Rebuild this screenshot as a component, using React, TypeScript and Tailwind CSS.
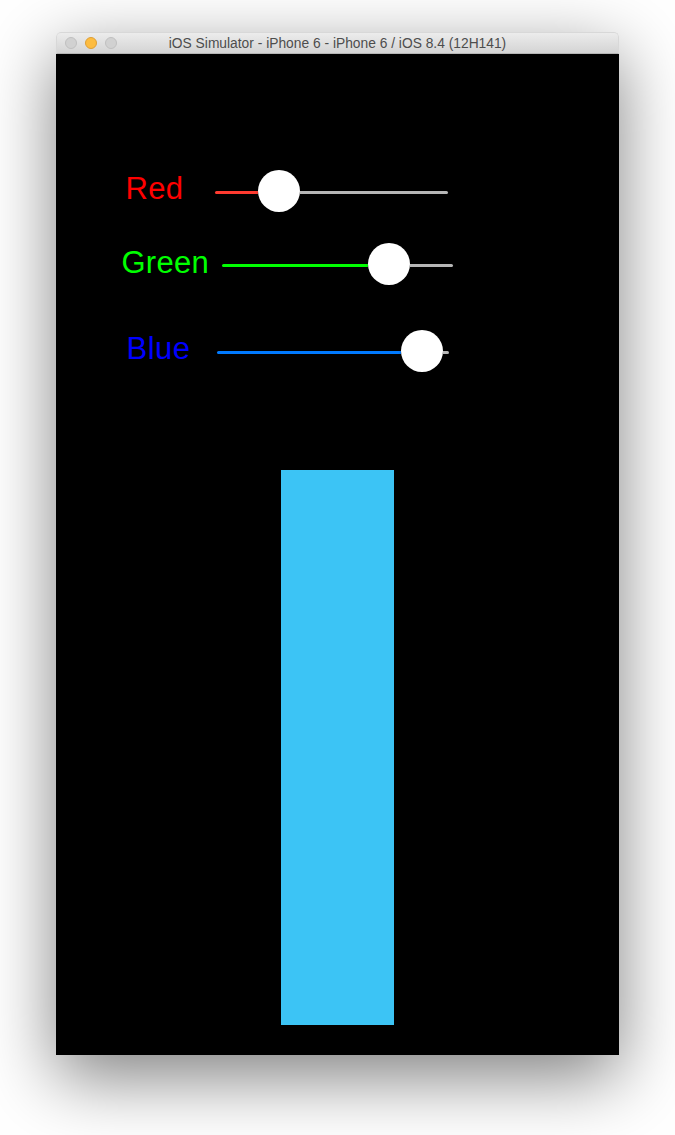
import React from "react";

function Slider({
  minLen,
  maxLen,
  color,
}: {
  minLen: number;
  maxLen: number;
  color: string;
}) {
  return (
    <div className="flex items-center">
      <div className="h-[2.5px] mt-[3px] rounded-l-full" style={{ width: minLen, backgroundColor: color }} />
      <div className="w-[42px] h-[42px] rounded-full bg-white shrink-0 shadow-[0_2px_3px_rgba(0,0,0,0.25)]" />
      <div className="h-[2.5px] mt-[3px] rounded-r-full bg-[#b6b6b6]" style={{ width: maxLen }} />
    </div>
  );
}

export default function App() {
  return (
    <div className="w-[675px] h-[1135px] bg-white overflow-hidden" style={{ fontFamily: '"Liberation Sans", Arial, sans-serif' }}>
      <div className="ml-[56px] mt-[32px] w-[563px] rounded-t-[5px] shadow-[0_22px_70px_0px_rgba(0,0,0,0.5)]">
        {/* Title bar */}
        <div className="relative h-[22px] rounded-t-[5px] bg-gradient-to-b from-[#ececec] to-[#d4d4d4] border-t border-x border-[#d8d8d8] border-b border-b-[#b5b5b5] flex items-center justify-center">
          <div className="absolute left-[8px] top-[4px] flex gap-[8px]">
            <div className="w-[12px] h-[12px] rounded-full bg-[#d1d1d1] border border-[#c0c0c0]" />
            <div className="w-[12px] h-[12px] rounded-full bg-[#fdbc40] border border-[#de9f34]" />
            <div className="w-[12px] h-[12px] rounded-full bg-[#d1d1d1] border border-[#c0c0c0]" />
          </div>
          <span className="text-[13.8px] leading-none text-[#4d4d4d] mt-[1px]">
            iOS Simulator - iPhone 6 - iPhone 6 / iOS 8.4 (12H141)
          </span>
        </div>
        {/* Content */}
        <div className="h-[1001px] bg-black flex flex-col">
          {/* Red */}
          <div className="flex items-start mt-[116px] pl-[69.6px]">
            <div className="w-[89.4px] mt-[3.8px] text-[31px] leading-[30px] tracking-[0.3px] text-[#ff0000]">Red</div>
            <Slider minLen={42.7} maxLen={148} color="#ff3b30" />
          </div>
          {/* Green */}
          <div className="flex items-start mt-[31px] pl-[65.4px]">
            <div className="w-[100.6px] mt-[5.4px] text-[31px] leading-[30px] tracking-[0.3px] text-[#00ff00]">Green</div>
            <Slider minLen={145.7} maxLen={43.3} color="#00ff00" />
          </div>
          {/* Blue */}
          <div className="flex items-start mt-[45px] pl-[70.5px]">
            <div className="w-[90.5px] mt-[3.8px] text-[31px] leading-[30px] tracking-[0.5px] text-[#0000ff]">Blue</div>
            <Slider minLen={183.7} maxLen={6.3} color="#007aff" />
          </div>
          {/* Color swatch */}
          <div className="mt-[98px] mx-auto w-[113px] h-[555px] bg-[#3cc4f5]" />
        </div>
      </div>
    </div>
  );
}
